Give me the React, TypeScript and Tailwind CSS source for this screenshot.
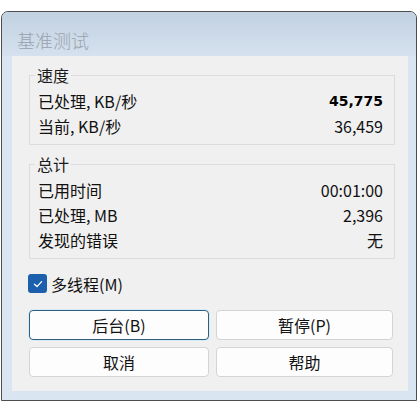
import { useState } from 'react';

const SPEED: Array<[string, string, boolean]> = [
  ['已处理, KB/秒', '45,775', true],
  ['当前, KB/秒', '36,459', false],
];

const TOTAL: Array<[string, string]> = [
  ['已用时间', '00:01:00'],
  ['已处理, MB', '2,396'],
  ['发现的错误', '无'],
];

function Group({ title, rows, className }: { title: string; rows: Array<[string, string, boolean?]>; className: string }) {
  return (
    <fieldset className={'border border-[#dcdcdc] pl-[5px] pr-[11px] ' + className}>
      <legend className="px-[2px] leading-[20px] text-[16px] text-[#1a1a1a]">{title}</legend>
      <div className="pl-[3px] pt-[4px]">
        {rows.map(([k, v, bold]) => (
          <div key={k} className="flex justify-between h-[25px] leading-[25px] text-[16px] text-[#111]">
            <span>{k}</span>
            {bold ? (
              <span className="font-bold text-[14px] text-black" style={{ fontFamily: '"DejaVu Sans", sans-serif' }}>{v}</span>
            ) : (
              <span>{v}</span>
            )}
          </div>
        ))}
      </div>
    </fieldset>
  );
}

function Btn({ label, primary }: { label: string; primary?: boolean }) {
  return (
    <button
      className={
        'h-[30px] rounded-[4px] bg-[#fdfdfd] text-[16px] text-[#111] leading-none ' +
        (primary ? 'border border-[#2f5f7c] shadow-[0_0_0_1px_#d6ebf8]' : 'border border-[#d4d4d4]')
      }
    >
      {label}
    </button>
  );
}

export default function App() {
  const [multi, setMulti] = useState(true);
  return (
    <div
      className="w-[417px] h-[409px] bg-white pt-[11px] pl-[1px]"
      style={{ fontFamily: '"Noto Sans CJK SC", "Noto Sans", sans-serif' }}
    >
      <div className="w-[416px] h-[390px] border border-[#4d4d4d] rounded-t-[7px] bg-[#d9e5f1] overflow-hidden">
        <div className="h-[44px] bg-gradient-to-b from-[#c2d1e1] to-[#d5e1ee] pl-[15px] pt-[19px]">
          <span className="block text-[18px] leading-[18px] font-light text-[#98a2ad]">基准测试</span>
        </div>
        <div className="ml-[10px] w-[396px] h-[335px] bg-[#f0f0f0] pl-[17px] flex flex-col">
          <Group title="速度" rows={SPEED} className="w-[366px] mt-[9px] pb-[5px]" />
          <Group title="总计" rows={TOTAL} className="w-[366px] mt-[9px] pb-[5px]" />
          <label className="flex items-center gap-[4px] mt-[15px] -ml-[1px] h-[19px] text-[16px] text-[#111]">
            <span
              onClick={() => setMulti(m => !m)}
              className={'w-[19px] h-[19px] rounded-[3px] flex items-center justify-center ' + (multi ? 'bg-[#1c5fad]' : 'border border-[#555] bg-white')}
            >
              {multi && (
                <svg width="12" height="12" viewBox="0 0 12 12" fill="none">
                  <path d="M2.5 6.3 L5 8.6 L9.6 3.6" stroke="white" strokeWidth="1.3" strokeLinecap="round" strokeLinejoin="round" />
                </svg>
              )}
            </span>
            多线程(M)
          </label>
          <div className="grid grid-cols-[180px_177px] gap-x-[7px] gap-y-[7px] mt-[17px]">
            <Btn label="后台(B)" primary />
            <Btn label="暂停(P)" />
            <Btn label="取消" />
            <Btn label="帮助" />
          </div>
        </div>
      </div>
    </div>
  );
}
